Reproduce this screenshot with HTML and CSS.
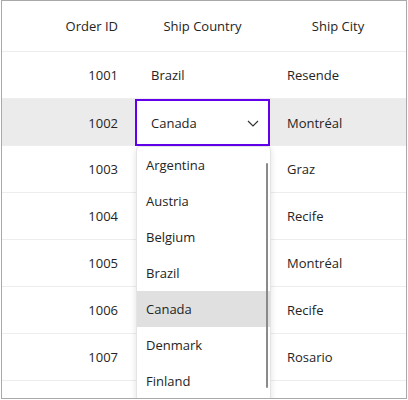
FILE: index.html
```
<!DOCTYPE html>
<html>
<head>
<meta charset="utf-8">
<link rel="stylesheet" href="styles.css">
</head>
<body>
<div class="grid">
  <div class="row header">
    <div class="cell num">Order ID</div>
    <div class="cell center">Ship Country</div>
    <div class="cell center">Ship City</div>
  </div>
  <div class="row">
    <div class="cell num">1001</div>
    <div class="cell country">Brazil</div>
    <div class="cell city">Resende</div>
  </div>
  <div class="row selected">
    <div class="cell num">1002</div>
    <div class="cell editcell">
      <div class="combo">
        <span>Canada</span>
        <svg class="chev" width="12" height="7" viewBox="0 0 12 7"><path d="M1 1 L6 6 L11 1" fill="none" stroke="#333" stroke-width="1.2"/></svg>
      </div>
    </div>
    <div class="cell city">Montréal</div>
  </div>
  <div class="row">
    <div class="cell num">1003</div>
    <div class="cell country"></div>
    <div class="cell city">Graz</div>
  </div>
  <div class="row">
    <div class="cell num">1004</div>
    <div class="cell country"></div>
    <div class="cell city">Recife</div>
  </div>
  <div class="row">
    <div class="cell num">1005</div>
    <div class="cell country"></div>
    <div class="cell city">Montréal</div>
  </div>
  <div class="row">
    <div class="cell num">1006</div>
    <div class="cell country"></div>
    <div class="cell city">Recife</div>
  </div>
  <div class="row">
    <div class="cell num">1007</div>
    <div class="cell country"></div>
    <div class="cell city">Rosario</div>
  </div>
  <div class="row">
    <div class="cell num"></div>
    <div class="cell country"></div>
    <div class="cell city"></div>
  </div>

  <div class="popup">
    <div class="item">Argentina</div>
    <div class="item">Austria</div>
    <div class="item">Belgium</div>
    <div class="item">Brazil</div>
    <div class="item active">Canada</div>
    <div class="item">Denmark</div>
    <div class="item">Finland</div>
    <div class="scrollbar"></div>
  </div>
</div>
</body>
</html>
```
FILE: styles.css
```
* { box-sizing: border-box; }
html, body { margin: 0; padding: 0; background: #fff; }
body {
  font-family: "Open Sans", "Noto Sans", sans-serif;
  font-size: 13px;
  color: #242424;
}
.grid {
  position: relative;
  margin-left: 1px;
  width: 406px;
  height: 399px;
  border: 1px solid #a9a9a9;
  overflow: hidden;
}
.row {
  display: grid;
  grid-template-columns: 133px 135px 1fr;
  height: 47px;
  border-bottom: 1px solid #ededed;
}
.row.header { height: 51px; }
.row.selected { background: #ebebeb; }
.cell {
  display: flex;
  align-items: center;
  white-space: nowrap;
}
.num { justify-content: flex-end; padding-right: 17px; }
.center { justify-content: center; }
.country { padding-left: 16px; }
.city { padding-left: 17px; }
.editcell { padding: 0; }
.combo {
  width: 135px;
  height: 47px;
  border: 2px solid #6200ee;
  background: #fff;
  display: flex;
  align-items: center;
  justify-content: space-between;
  padding: 0 9px 0 14px;
}
.chev { display: block; margin-top: 1px; }
.popup {
  position: absolute;
  left: 134px;
  top: 145px;
  width: 135px;
  height: 300px;
  background: #fff;
  border-radius: 4px 4px 0 0;
  border: 1px solid #e4e4e4;
  box-shadow: 0 2px 6px rgba(0,0,0,0.12);
}
.item {
  height: 36px;
  display: flex;
  align-items: center;
  padding-left: 9px;
}
.item.active { background: #e0e0e0; }
.scrollbar {
  position: absolute;
  left: 129px;
  top: 16px;
  width: 2px;
  height: 225px;
  background: #8a8a8a;
  border-radius: 1px;
}
```
